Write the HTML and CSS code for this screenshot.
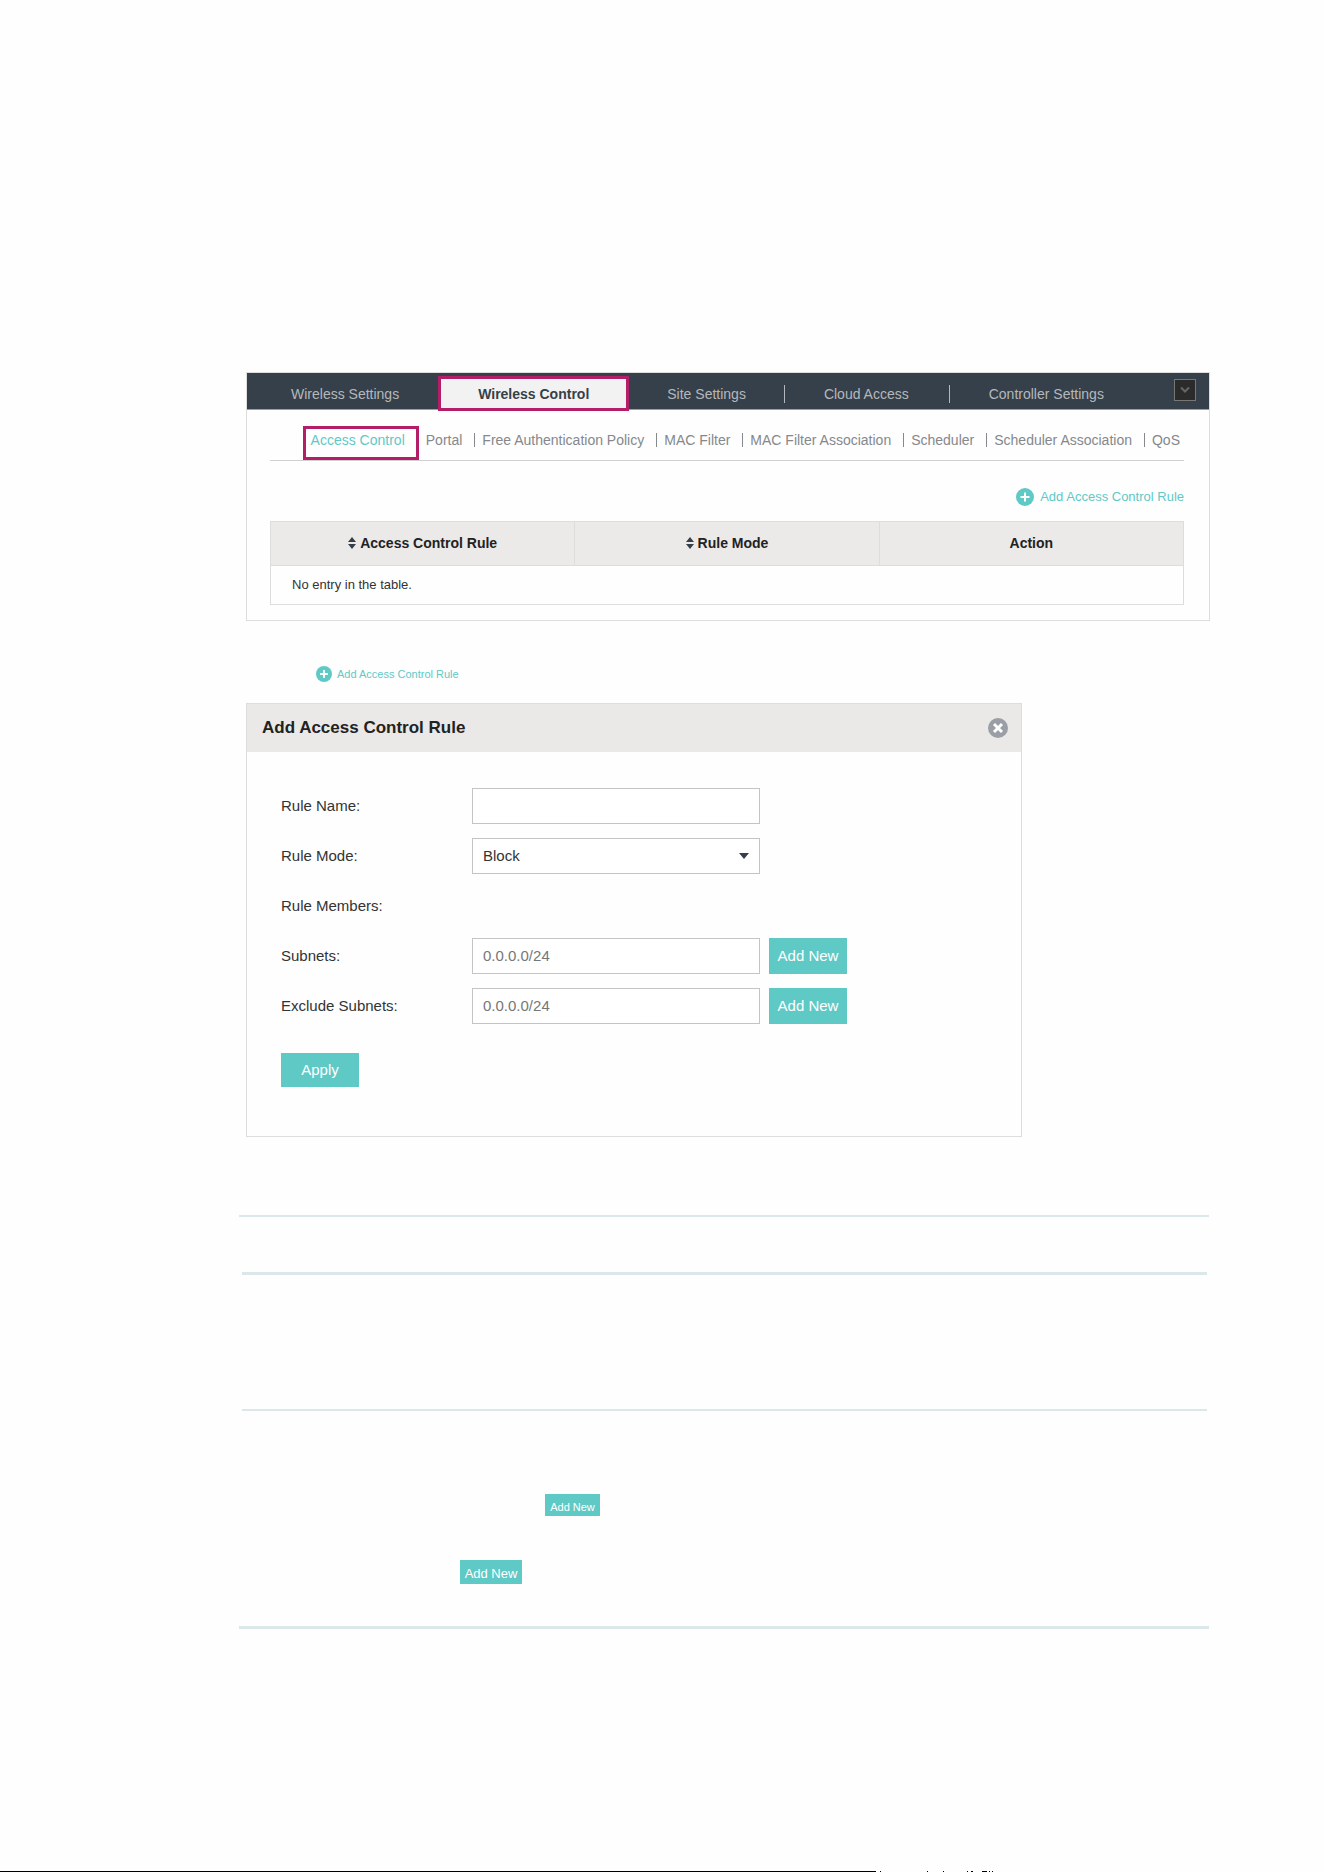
FILE: index.html
```html
<!DOCTYPE html>
<html lang="en">
<head>
    <meta charset="UTF-8" />
    <title>Access Control</title>
    <link rel="stylesheet" href="styles.css">
</head>
<body>
    <main>
        <section class="panel">
            <nav class="tabs">
                <a href="#">Wireless Settings</a>
                <a href="#" class="active">Wireless Control</a>
                <a href="#">Site Settings</a>
                <a href="#" class="divided">Cloud Access</a>
                <a href="#" class="divided">Controller Settings</a>
                <button class="collapse" aria-label="Collapse">
                    <svg width="10" height="8" viewBox="0 0 10 8"><path d="M1 1.500L5 5.500L9 1.500" fill="none" stroke="#666" stroke-width="2"/></svg>
                </button>
            </nav>
            <div class="panel-body">
                <nav class="subtabs">
                    <a href="#" class="active">Access Control</a>
                    <a href="#">Portal</a>
                    <a href="#">Free Authentication Policy</a>
                    <a href="#">MAC Filter</a>
                    <a href="#">MAC Filter Association</a>
                    <a href="#">Scheduler</a>
                    <a href="#">Scheduler Association</a>
                    <a href="#">QoS</a>
                </nav>
                <div class="toolbar">
                    <a href="#" class="add-rule">
                        <svg width="18" height="18" viewBox="0 0 18 18"><circle cx="9" cy="9" r="9" fill="#5fc9c6"/><path d="M9 4.500V13.500M4.500 9H13.500" stroke="#fff" stroke-width="2"/></svg>
                        Add Access Control Rule
                    </a>
                </div>
                <table>
                    <thead>
                        <tr>
                            <th><svg class="sort" width="8" height="12" viewBox="0 0 8 12"><path d="M0 5L4 0L8 5ZM0 7L4 12L8 7Z" fill="#36404a"/></svg>Access Control Rule</th>
                            <th><svg class="sort" width="8" height="12" viewBox="0 0 8 12"><path d="M0 5L4 0L8 5ZM0 7L4 12L8 7Z" fill="#36404a"/></svg>Rule Mode</th>
                            <th>Action</th>
                        </tr>
                    </thead>
                    <tbody>
                        <tr>
                            <td colspan="3">No entry in the table.</td>
                        </tr>
                    </tbody>
                </table>
            </div>
        </section>

        <div class="step">
            <a href="#" class="add-rule small">
                <svg width="16" height="16" viewBox="0 0 18 18"><circle cx="9" cy="9" r="9" fill="#5fc9c6"/><path d="M9 4.500V13.500M4.500 9H13.500" stroke="#fff" stroke-width="2"/></svg>
                Add Access Control Rule
            </a>
        </div>

        <section class="dialog">
            <header>
                <h2>Add Access Control Rule</h2>
                <button class="close" aria-label="Close">
                    <svg width="20" height="20" viewBox="0 0 20 20"><circle cx="10" cy="10" r="10" fill="#9a9fa5"/><path d="M6 6L14 14M14 6L6 14" stroke="#fff" stroke-width="3"/></svg>
                </button>
            </header>
            <form>
                <div class="row">
                    <label for="name">Rule Name:</label>
                    <input type="text" id="name">
                </div>
                <div class="row">
                    <label for="mode">Rule Mode:</label>
                    <div class="select">
                        <select id="mode">
                            <option>Block</option>
                            <option>Allow</option>
                        </select>
                        <svg width="10" height="6" viewBox="0 0 10 6"><path d="M0 0H10L5 6Z" fill="#36404a"/></svg>
                    </div>
                </div>
                <div class="row">
                    <span class="label">Rule Members:</span>
                </div>
                <div class="row">
                    <label for="subnets">Subnets:</label>
                    <input type="text" id="subnets" placeholder="0.0.0.0/24">
                    <button type="button">Add New</button>
                </div>
                <div class="row">
                    <label for="exclude">Exclude Subnets:</label>
                    <input type="text" id="exclude" placeholder="0.0.0.0/24">
                    <button type="button">Add New</button>
                </div>
                <button type="button" class="apply">Apply</button>
            </form>
        </section>

        <section class="params">
            <div class="param-head"></div>
            <div class="param-mode"></div>
            <div class="param-members">
                <button class="add-subnet">Add New</button>
                <button class="add-exclude">Add New</button>
            </div>
        </section>
    </main>

    <footer>
        <div class="rule"></div>
        <svg width="120" height="1" viewBox="0 0 120 1" shape-rendering="crispEdges"><path d="M4 0h1v1h-1zM51 0h1v1h-1zM67 0h1v1h-1zM91 0h1v1h-1zM95 0h2v1h-2zM106 0h5v1h-5zM113 0h1v1h-1zM116 0h1v1h-1z"/></svg>
    </footer>
</body>
</html>
```

FILE: styles.css
```css
* {
    box-sizing: border-box;
}

body {
    margin: 0;
    min-height: 100vh;
    display: flex;
    flex-direction: column;
    background-color: #fefefe;
    font-family: "Liberation Sans", Arial, sans-serif;
    font-size: 14px;
    color: #333;
}

main {
    padding: 372px 114px 0 246px;
}

a {
    text-decoration: none;
}

svg {
    display: block;
}

button {
    padding: 0;
    border: none;
    background-color: #5fc9c6;
    color: white;
    font-family: inherit;
    cursor: pointer;
}

/* top panel */
.panel {
    border: 1px solid #ddd;
}

.tabs {
    display: flex;
    align-items: stretch;
    height: 37px;
    padding-left: 6px;
    background-color: #36404a;
    border-bottom: 1px solid #9a9fa5;
}

.tabs a {
    position: relative;
    padding: 0 38px;
    line-height: 42px;
    color: #b4b8bc;
    white-space: nowrap;
}

.tabs a.active {
    margin: 3px 0 -2px 1px;
    padding: 0 37px;
    border: 3px solid #b41e69;
    background-color: #f2f2f2;
    color: #36404a;
    font-weight: bold;
    line-height: 30px;
}

.tabs a.divided {
    padding: 0 40px;
}

.tabs a.divided::before {
    content: "";
    position: absolute;
    left: 0;
    top: 12px;
    width: 1px;
    height: 18px;
    background-color: #b4b8bc;
}

.tabs .collapse {
    display: flex;
    align-items: center;
    justify-content: center;
    width: 22px;
    height: 22px;
    margin: 6px 13px 0 auto;
    border: 1px solid #777;
    background-color: #2b2b2b;
}

.panel-body {
    padding: 16px 25px 15px 23px;
}

.subtabs {
    display: flex;
    justify-content: flex-end;
    height: 35px;
    padding-right: 4px;
    border-bottom: 1px solid #d0d0d0;
}

.subtabs a {
    display: flex;
    height: 28px;
    padding-right: 12px;
    line-height: 28px;
    color: #85888c;
    white-space: nowrap;
}

.subtabs a:last-child {
    padding-right: 0;
}

.subtabs a.active {
    height: 34px;
    margin-right: 7px;
    padding: 0 11px 0 5px;
    border: 3px solid #b41e69;
    line-height: 22px;
    color: #5fc9c6;
}

.subtabs a:nth-child(n+3)::before {
    content: "";
    width: 1px;
    height: 14px;
    margin: 7px 7px 0 0;
    background-color: #85888c;
}

.toolbar {
    display: flex;
    justify-content: flex-end;
    padding: 27px 0 15px;
}

.add-rule {
    display: flex;
    align-items: center;
    gap: 6px;
    font-size: 13px;
    line-height: 18px;
    color: #5fc9c6;
}

.add-rule.small {
    gap: 5px;
    font-size: 11px;
}

table {
    width: 100%;
    table-layout: fixed;
    border-collapse: collapse;
}

th, td {
    border: 1px solid #ddd;
    padding: 0 21px 2px;
}

th {
    height: 44px;
    background-color: #ebeae8;
    color: #222;
}

td {
    height: 39px;
    font-size: 13px;
}

.sort {
    display: inline-block;
    margin-right: 4px;
    vertical-align: -1px;
}

.step {
    padding: 44px 70px 20px;
}

/* add rule form */
.dialog {
    max-width: 776px;
    border: 1px solid #ddd;
    font-size: 15px;
}

.dialog header {
    display: flex;
    align-items: center;
    justify-content: space-between;
    height: 48px;
    padding: 0 13px 0 15px;
    background-color: #eae9e7;
}

.dialog h2 {
    margin: 0;
    font-size: 17px;
    color: #222;
}

.close {
    border-radius: 50%;
    background: none;
}

form {
    padding: 36px 34px 49px;
}

.row {
    display: flex;
    align-items: center;
    height: 36px;
    margin-bottom: 14px;
}

.row label, .row .label {
    width: 191px;
    padding-bottom: 2px;
}

input, select {
    width: 288px;
    height: 36px;
    padding: 0 10px 2px;
    border: 1px solid #c4c4c4;
    border-radius: 0;
    background-color: white;
    font-family: inherit;
    font-size: 15px;
    color: #333;
}

input::placeholder {
    color: #777;
}

select {
    appearance: none;
}

.select {
    position: relative;
}

.select svg {
    position: absolute;
    right: 11px;
    top: 15px;
    pointer-events: none;
}

.row button {
    width: 78px;
    height: 36px;
    margin-left: 9px;
    padding-bottom: 2px;
    font-size: 15px;
}

.apply {
    width: 78px;
    height: 34px;
    margin-top: 15px;
    padding-bottom: 2px;
    font-size: 15px;
}

/* parameter list */
.params {
    margin: 78px 1px 0 -7px;
    border-top: 2px solid #dce7ea;
    border-bottom: 3px solid #dce7ea;
}

.param-head, .param-mode {
    margin: 0 2px 0 3px;
}

.param-head {
    height: 58px;
    border-bottom: 3px solid #dce7ea;
}

.param-mode {
    height: 136px;
    border-bottom: 2px solid #dce7ea;
}

.param-members {
    display: flex;
    flex-direction: column;
    align-items: flex-start;
    gap: 44px;
    padding: 83px 0 42px;
}

.add-subnet {
    width: 55px;
    height: 22px;
    margin-left: 306px;
    padding-top: 3px;
    font-size: 11px;
}

.add-exclude {
    width: 62px;
    height: 24px;
    margin-left: 221px;
    padding-top: 3px;
    font-size: 13px;
}

footer {
    display: flex;
    height: 1px;
    margin-top: auto;
}

footer .rule {
    width: calc(66% + 2px);
    height: 1px;
    background-color: black;
}
```
